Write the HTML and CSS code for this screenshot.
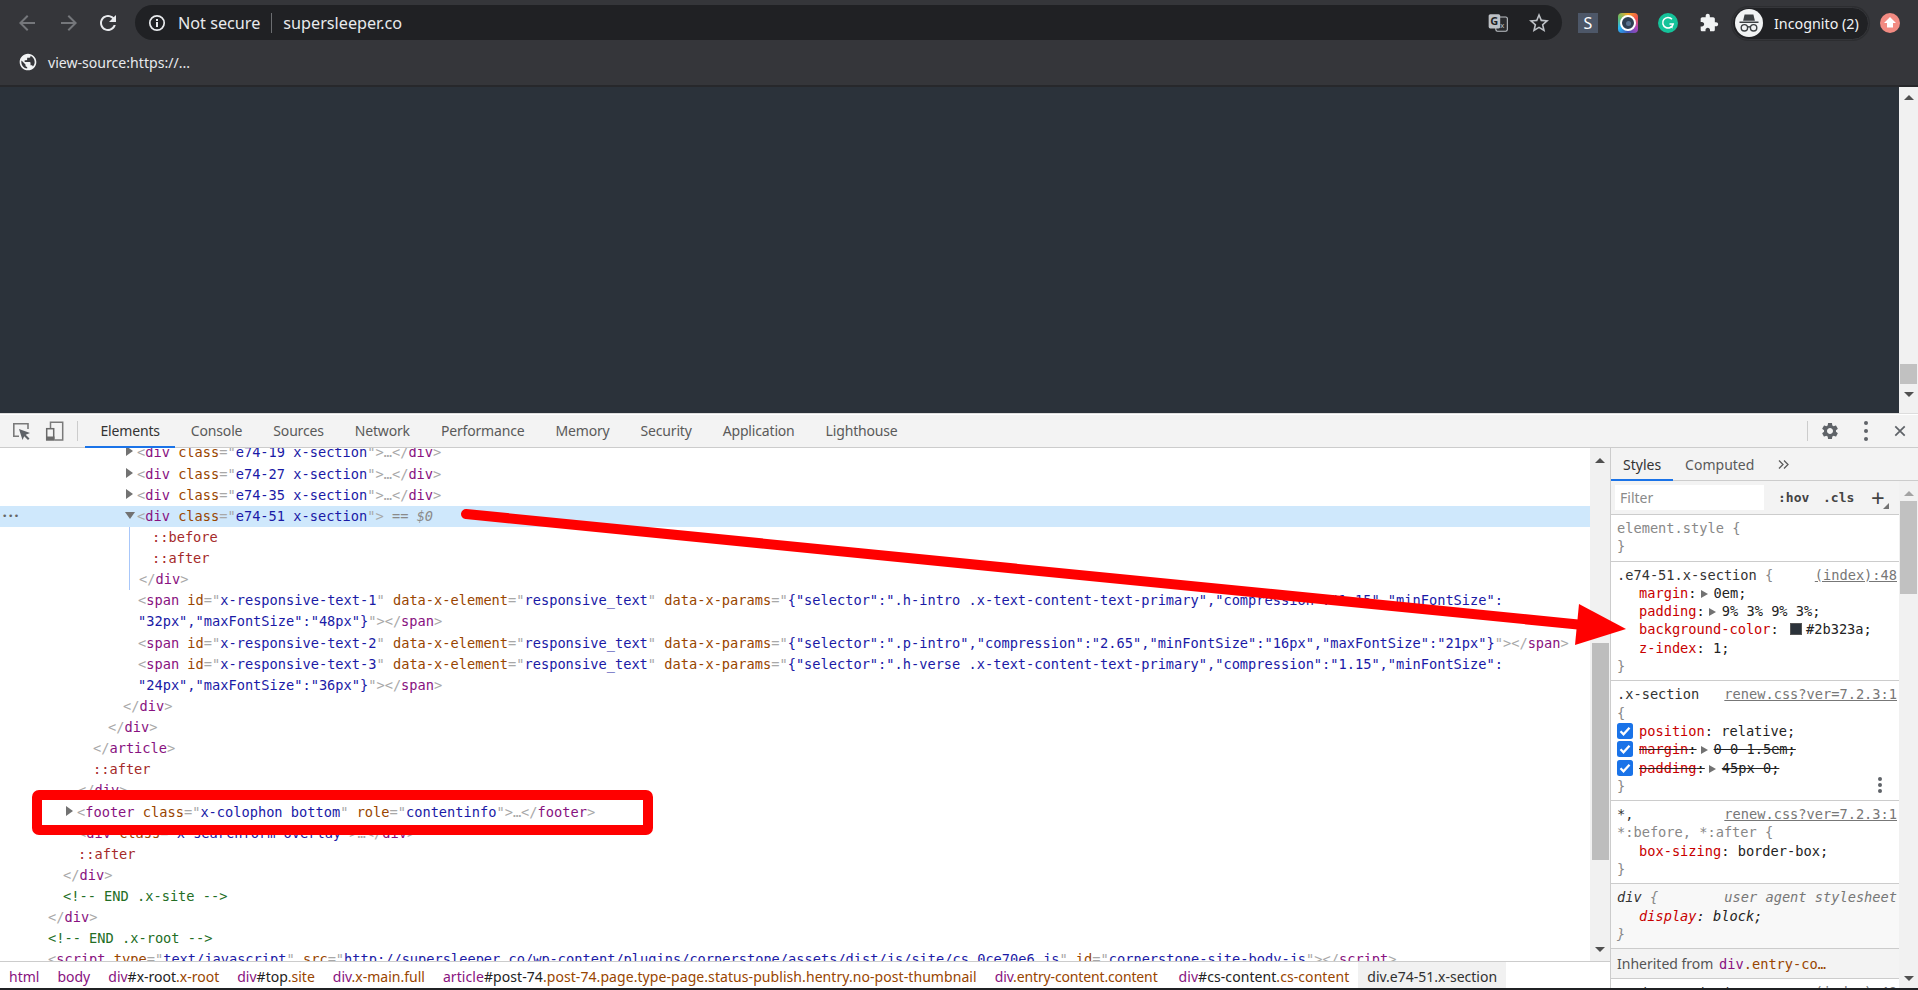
FILE: index.html
```html
<!DOCTYPE html>
<html lang="en">
<head>
<meta charset="utf-8">
<title>view-source:https://...</title>
<link rel="stylesheet" href="styles.css">
</head>
<body>
<div class="browser">
  <header class="chrome">
    <div class="navrow">
      <svg class="ic24 nav-btn dim" viewBox="0 0 24 24"><path d="M20 11H7.83l5.59-5.59L12 4l-8 8 8 8 1.41-1.41L7.83 13H20v-2z"/></svg>
      <svg class="ic24 nav-btn dim fwd" viewBox="0 0 24 24"><path d="M12 4l-1.41 1.41L16.17 11H4v2h12.17l-5.58 5.59L12 20l8-8z"/></svg>
      <svg class="ic24 nav-btn light" viewBox="0 0 24 24"><path d="M17.65 6.35C16.2 4.9 14.21 4 12 4c-4.42 0-7.99 3.58-7.99 8s3.57 8 7.99 8c3.73 0 6.84-2.55 7.73-6h-2.08c-.82 2.33-3.04 4-5.65 4-3.31 0-6-2.69-6-6s2.69-6 6-6c1.66 0 3.14.69 4.22 1.78L13 11h7V4l-2.35 2.35z"/></svg>
      <div class="omnibox">
        <svg class="info" viewBox="0 0 18 18"><circle cx="9" cy="9" r="7.2" fill="none" stroke="#e8eaed" stroke-width="1.7"/><rect x="8" y="8" width="2" height="5" fill="#e8eaed"/><rect x="8" y="5" width="2" height="2" fill="#e8eaed"/></svg>
        <span class="secure">Not secure</span>
        <span class="omni-sep"></span>
        <span class="url">supersleeper.co</span>
        <span class="spacer"></span>
        <svg class="translate" viewBox="0 0 20 20"><rect x="8" y="4.5" width="10.5" height="13" rx="1.5" fill="#2a2b2e" stroke="#bdc1c6" stroke-width="1"/><rect x="1.5" y="2" width="10.5" height="13" rx="1.5" fill="#bdc1c6"/><text x="3" y="12" class="tr-g">G</text><text x="12" y="14.5" class="tr-x">x</text></svg>
        <svg class="ic24 star" viewBox="0 0 24 24"><path d="M22 9.24l-7.19-.62L12 2 9.19 8.63 2 9.24l5.46 4.73L5.82 21 12 17.27 18.18 21l-1.63-7.03L22 9.24zM12 15.4l-3.76 2.27 1-4.28-3.32-2.88 4.38-.38L12 6.1l1.71 4.04 4.38.38-3.32 2.88 1 4.28L12 15.4z"/></svg>
      </div>
      <div class="extensions">
        <span class="ext-s">S</span>
        <span class="ext-lens"><span class="lens-ring"><span class="lens-core"></span></span></span>
        <svg class="ext-g" viewBox="0 0 20 20"><circle cx="10" cy="10" r="10" fill="#15c39a"/><path d="M14 6.2A5.3 5.3 0 1 0 15.2 11H11.5" fill="none" stroke="#fff" stroke-width="1.5"/><path d="M12 13.2l2.6.2-.2 2.3z" fill="#fff"/></svg>
        <svg class="ext-p" viewBox="0 0 24 24"><path d="M20.5 11H19V7c0-1.1-.9-2-2-2h-4V3.5C13 2.12 11.88 1 10.5 1S8 2.12 8 3.5V5H4c-1.1 0-1.99.9-1.99 2v3.8H3.5c1.49 0 2.7 1.21 2.7 2.7s-1.21 2.7-2.7 2.7H2V20c0 1.1.9 2 2 2h3.8v-1.5c0-1.49 1.21-2.7 2.7-2.7 1.49 0 2.7 1.21 2.7 2.7V22H17c1.1 0 2-.9 2-2v-4h1.5c1.38 0 2.5-1.12 2.5-2.5S21.88 11 20.5 11z"/></svg>
      </div>
      <div class="incognito">
        <svg class="inc-face" viewBox="0 0 28 28"><circle cx="14" cy="14" r="14" fill="#f1f3f4"/><path d="M9.6 5.5h8.8l1.5 6.2H8.1zM4.5 12.6h19v1.5h-19z" fill="#3c4043"/><g fill="none" stroke="#3c4043" stroke-width="1.4"><circle cx="9.4" cy="18.8" r="3.2"/><circle cx="18.6" cy="18.8" r="3.2"/><path d="M12.5 18.2q1.5-1 3 0"/></g></svg>
        <span class="inc-label">Incognito (2)</span>
      </div>
      <svg class="update" viewBox="0 0 20 20"><circle cx="10" cy="10" r="10" fill="#f28b82"/><path d="M10 4l6 6h-3v4.5H7V10H4z" fill="#fff"/></svg>
    </div>
    <div class="bookmarks">
      <svg class="globe" viewBox="0 0 24 24"><path d="M12 2C6.48 2 2 6.48 2 12s4.48 10 10 10 10-4.48 10-10S17.52 2 12 2zm-1 17.93c-3.95-.49-7-3.85-7-7.93 0-.62.08-1.21.21-1.79L9 15v1c0 1.1.9 2 2 2v1.93zm6.9-2.54c-.26-.81-1-1.39-1.9-1.39h-1v-3c0-.55-.45-1-1-1H8v-2h2c.55 0 1-.45 1-1V7h2c1.1 0 2-.9 2-2v-.41c2.93 1.19 5 4.06 5 7.41 0 2.08-.8 3.97-2.1 5.39z"/></svg>
      <span class="bm-label">view-source:https://...</span>
    </div>
  </header>

  <section class="page">
    <div class="page-canvas"></div>
    <div class="page-scroll">
      <span class="tri-up"></span>
      <span class="page-thumb"></span>
      <span class="tri-down"></span>
    </div>
  </section>

  <section class="devtools">
    <div class="dt-toolbar">
      <svg class="dt-ic" viewBox="0 0 20 20"><path d="M8 15.3H2.8V2.8H17V8" fill="none" stroke="#7a7a7a" stroke-width="1.6"/><path d="M8 8l11 4-4.3 1.8 3.8 3.8-1.5 1.5-3.8-3.8L11.5 19z" fill="#5f6368"/></svg>
      <svg class="dt-ic device" viewBox="0 0 20 20"><path d="M6.5 7V1.2H18.7V19H10.5" fill="none" stroke="#7a7a7a" stroke-width="1.5"/><rect x="2.7" y="7.7" width="7" height="11" fill="none" stroke="#6a6a6a" stroke-width="1.5"/><rect x="2" y="15.5" width="8.5" height="4" fill="#6a6a6a"/></svg>
      <span class="dt-sep"></span>
      <nav class="tabs">
        <span class="tab active">Elements</span>
        <span class="tab">Console</span>
        <span class="tab">Sources</span>
        <span class="tab">Network</span>
        <span class="tab">Performance</span>
        <span class="tab">Memory</span>
        <span class="tab">Security</span>
        <span class="tab">Application</span>
        <span class="tab">Lighthouse</span>
      </nav>
      <span class="spacer"></span>
      <span class="dt-sep right"></span>
      <svg class="ic24 gear" viewBox="0 0 24 24"><path d="M19.14 12.94c.04-.3.06-.61.06-.94 0-.32-.02-.64-.07-.94l2.03-1.58c.18-.14.23-.41.12-.61l-1.92-3.32c-.12-.22-.37-.29-.59-.22l-2.39.96c-.5-.38-1.03-.7-1.62-.94l-.36-2.54c-.04-.24-.24-.41-.48-.41h-3.84c-.24 0-.43.17-.47.41l-.36 2.54c-.59.24-1.13.57-1.62.94l-2.39-.96c-.22-.08-.47 0-.59.22L2.74 8.87c-.12.21-.08.47.12.61l2.03 1.58c-.05.3-.09.63-.09.94s.02.64.07.94l-2.03 1.58c-.18.14-.23.41-.12.61l1.92 3.32c.12.22.37.29.59.22l2.39-.96c.5.38 1.03.7 1.62.94l.36 2.54c.05.24.24.41.48.41h3.84c.24 0 .44-.17.47-.41l.36-2.54c.59-.24 1.13-.56 1.62-.94l2.39.96c.22.08.47 0 .59-.22l1.92-3.32c.12-.22.07-.47-.12-.61l-2.01-1.58zM12 15.6c-1.98 0-3.6-1.62-3.6-3.6s1.62-3.6 3.6-3.6 3.6 1.62 3.6 3.6-1.62 3.6-3.6 3.6z"/></svg>
      <span class="kebab dt-kebab"><i></i><i></i><i></i></span>
      <svg class="dt-close" viewBox="0 0 14 14"><path d="M1.5 1.5l11 11M12.5 1.5l-11 11" stroke="#5f6368" stroke-width="2" fill="none"/></svg>
    </div>

    <div class="dt-body">
      <div class="dt-main">
        <div class="dt-upper">
          <div class="tree">
            <div class="row l6"><span class="tri"></span><span class="p">&lt;</span><span class="t">div</span> <span class="a">class</span><span class="p">="</span><span class="v">e74-19 x-section</span><span class="p">"&gt;</span><span class="p">…&lt;/</span><span class="t">div</span><span class="p">&gt;</span></div>
            <div class="row l6"><span class="tri"></span><span class="p">&lt;</span><span class="t">div</span> <span class="a">class</span><span class="p">="</span><span class="v">e74-27 x-section</span><span class="p">"&gt;</span><span class="p">…&lt;/</span><span class="t">div</span><span class="p">&gt;</span></div>
            <div class="row l6"><span class="tri"></span><span class="p">&lt;</span><span class="t">div</span> <span class="a">class</span><span class="p">="</span><span class="v">e74-35 x-section</span><span class="p">"&gt;</span><span class="p">…&lt;/</span><span class="t">div</span><span class="p">&gt;</span></div>
            <div class="row l6 selected"><span class="more">•••</span><span class="tri open"></span><span class="p">&lt;</span><span class="t">div</span> <span class="a">class</span><span class="p">="</span><span class="v">e74-51 x-section</span><span class="p">"&gt;</span> <span class="dollar">== <em>$0</em></span></div>
            <div class="guide">
              <div class="row in"><span class="ps">::before</span></div>
              <div class="row in"><span class="ps">::after</span></div>
              <div class="row"><span class="p">&lt;/</span><span class="t">div</span><span class="p">&gt;</span></div>
            </div>
            <div class="row l6"><span class="p">&lt;</span><span class="t">span</span> <span class="a">id</span><span class="p">="</span><span class="v">x-responsive-text-1</span><span class="p">"</span> <span class="a">data-x-element</span><span class="p">="</span><span class="v">responsive_text</span><span class="p">"</span> <span class="a">data-x-params</span><span class="p">="</span><span class="v">{"selector":".h-intro .x-text-content-text-primary","compression":"1.15","minFontSize":</span></div>
            <div class="row l6"><span class="v">"32px","maxFontSize":"48px"}</span><span class="p">"&gt;&lt;/</span><span class="t">span</span><span class="p">&gt;</span></div>
            <div class="row l6"><span class="p">&lt;</span><span class="t">span</span> <span class="a">id</span><span class="p">="</span><span class="v">x-responsive-text-2</span><span class="p">"</span> <span class="a">data-x-element</span><span class="p">="</span><span class="v">responsive_text</span><span class="p">"</span> <span class="a">data-x-params</span><span class="p">="</span><span class="v">{"selector":".p-intro","compression":"2.65","minFontSize":"16px","maxFontSize":"21px"}</span><span class="p">"&gt;&lt;/</span><span class="t">span</span><span class="p">&gt;</span></div>
            <div class="row l6"><span class="p">&lt;</span><span class="t">span</span> <span class="a">id</span><span class="p">="</span><span class="v">x-responsive-text-3</span><span class="p">"</span> <span class="a">data-x-element</span><span class="p">="</span><span class="v">responsive_text</span><span class="p">"</span> <span class="a">data-x-params</span><span class="p">="</span><span class="v">{"selector":".h-verse .x-text-content-text-primary","compression":"1.15","minFontSize":</span></div>
            <div class="row l6"><span class="v">"24px","maxFontSize":"36px"}</span><span class="p">"&gt;&lt;/</span><span class="t">span</span><span class="p">&gt;</span></div>
            <div class="row l5"><span class="p">&lt;/</span><span class="t">div</span><span class="p">&gt;</span></div>
            <div class="row l4"><span class="p">&lt;/</span><span class="t">div</span><span class="p">&gt;</span></div>
            <div class="row l3"><span class="p">&lt;/</span><span class="t">article</span><span class="p">&gt;</span></div>
            <div class="row l3"><span class="ps">::after</span></div>
            <div class="row l2"><span class="p">&lt;/</span><span class="t">div</span><span class="p">&gt;</span></div>
            <div class="row l2"><span class="tri"></span><span class="p">&lt;</span><span class="t">footer</span> <span class="a">class</span><span class="p">="</span><span class="v">x-colophon bottom</span><span class="p">"</span> <span class="a">role</span><span class="p">="</span><span class="v">contentinfo</span><span class="p">"&gt;</span><span class="p">…&lt;/</span><span class="t">footer</span><span class="p">&gt;</span></div>
            <div class="row l2"><span class="p">&lt;</span><span class="t">div</span> <span class="a">class</span><span class="p">="</span><span class="v">x-searchform-overlay</span><span class="p">"&gt;</span><span class="p">…&lt;/</span><span class="t">div</span><span class="p">&gt;</span></div>
            <div class="row l2"><span class="ps">::after</span></div>
            <div class="row l1"><span class="p">&lt;/</span><span class="t">div</span><span class="p">&gt;</span></div>
            <div class="row l1"><span class="c">&lt;!-- END .x-site --&gt;</span></div>
            <div class="row l0"><span class="p">&lt;/</span><span class="t">div</span><span class="p">&gt;</span></div>
            <div class="row l0"><span class="c">&lt;!-- END .x-root --&gt;</span></div>
            <div class="row l0"><span class="p">&lt;</span><span class="t">script</span> <span class="a">type</span><span class="p">="</span><span class="v">text/javascript</span><span class="p">"</span> <span class="a">src</span><span class="p">="</span><span class="v">http://supersleeper.co/wp-content/plugins/cornerstone/assets/dist/js/site/cs.0ce70e6.js</span><span class="p">"</span> <span class="a">id</span><span class="p">="</span><span class="v">cornerstone-site-body-js</span><span class="p">"&gt;&lt;/</span><span class="t">script</span><span class="p">&gt;</span></div>
          </div>
          <div class="tree-scroll">
            <span class="tri-up"></span>
            <span class="tree-track"><span class="tree-thumb"></span></span>
            <span class="tri-down"></span>
          </div>
        </div>
        <div class="crumbs">
          <span class="crumb"><span class="t2">html</span></span>
          <span class="crumb"><span class="t2">body</span></span>
          <span class="crumb"><span class="t2">div</span>#x-root<span class="k">.x-root</span></span>
          <span class="crumb"><span class="t2">div</span>#top<span class="k">.site</span></span>
          <span class="crumb"><span class="t2">div</span><span class="k">.x-main.full</span></span>
          <span class="crumb wide"><span class="t2">article</span>#post-74<span class="k">.post-74.page.type-page.status-publish.hentry.no-post-thumbnail</span></span>
          <span class="crumb tight"><span class="t2">div</span><span class="k">.entry-content.content</span></span>
          <span class="crumb wide"><span class="t2">div</span>#cs-content<span class="k">.cs-content</span></span>
          <span class="crumb current">div.e74-51.x-section</span>
        </div>
      </div>

      <aside class="sidebar">
        <div class="side-tabs">
          <span class="stab active">Styles</span>
          <span class="stab">Computed</span>
          <svg class="chev" viewBox="0 0 11 9"><path d="M1 .5l4 4-4 4M6 .5l4 4-4 4" fill="none" stroke="#5a5a5a" stroke-width="1.3"/></svg>
        </div>
        <div class="side-content">
          <div class="side-scroller">
            <div class="filterbar">
              <span class="filter">Filter</span>
              <span class="fbtn hov">:hov</span>
              <span class="fbtn">.cls</span>
              <span class="plus">+</span>
            </div>
            <div class="rule">
              <div class="ln"><span class="sel dim-sel">element.style</span> <span class="br">{</span></div>
              <div class="ln"><span class="br">}</span></div>
            </div>
            <div class="rule">
              <div class="ln split"><span><span class="sel">.e74-51.x-section</span> <span class="br">{</span></span><span class="src">(index):48</span></div>
              <div class="ln decl"><span class="pn">margin</span>:<span class="mini"></span>0em;</div>
              <div class="ln decl"><span class="pn">padding</span>:<span class="mini"></span>9% 3% 9% 3%;</div>
              <div class="ln decl"><span class="pn">background-color</span>: <span class="swatch"></span>#2b323a;</div>
              <div class="ln decl"><span class="pn">z-index</span>: 1;</div>
              <div class="ln"><span class="br">}</span></div>
            </div>
            <div class="rule has-menu">
              <div class="ln split"><span class="sel">.x-section</span><span class="src">renew.css?ver=7.2.3:1</span></div>
              <div class="ln"><span class="br">{</span></div>
              <div class="ln chk"><span class="check"><svg viewBox="0 0 16 16"><path d="M3.5 8.3l3 3 6-6.5" fill="none" stroke="#fff" stroke-width="2.3"/></svg></span><span><span class="pn">position</span>: relative;</span></div>
              <div class="ln chk"><span class="check"><svg viewBox="0 0 16 16"><path d="M3.5 8.3l3 3 6-6.5" fill="none" stroke="#fff" stroke-width="2.3"/></svg></span><s class="strike"><span class="pn">margin</span>:<span class="mini"></span>0 0 1.5em;</s></div>
              <div class="ln chk"><span class="check"><svg viewBox="0 0 16 16"><path d="M3.5 8.3l3 3 6-6.5" fill="none" stroke="#fff" stroke-width="2.3"/></svg></span><s class="strike"><span class="pn">padding</span>:<span class="mini"></span>45px 0;</s></div>
              <div class="ln"><span class="br">}</span></div>
              <span class="kebab rule-kebab"><i></i><i></i><i></i></span>
            </div>
            <div class="rule">
              <div class="ln split"><span class="sel">*,</span><span class="src">renew.css?ver=7.2.3:1</span></div>
              <div class="ln"><span class="dim-sel">*:before, *:after</span> <span class="br">{</span></div>
              <div class="ln decl"><span class="pn">box-sizing</span>: border-box;</div>
              <div class="ln"><span class="br">}</span></div>
            </div>
            <div class="rule ua">
              <div class="ln split"><span><span class="sel">div</span> <span class="br">{</span></span><span class="src plain">user agent stylesheet</span></div>
              <div class="ln decl"><span class="pn">display</span>: block;</div>
              <div class="ln"><span class="br">}</span></div>
            </div>
            <div class="inherited">Inherited from <span class="inh-link"><span class="t">div</span><span class="a">.entry-co…</span></span></div>
            <div class="ln clipped split"><span class="sel">.entry-content</span><span class="src">(index):48</span></div>
          </div>
          <div class="side-scroll">
            <span class="tri-up pale"></span>
            <span class="side-thumb"></span>
            <span class="spacer"></span>
            <span class="tri-down"></span>
          </div>
        </div>
      </aside>
    </div>
  </section>
  <div class="bottom-edge"></div>
</div>

<svg class="annot" viewBox="0 0 1918 990">
  <path d="M466 514L1578 624.5" stroke="#ff0000" stroke-width="10" stroke-linecap="round" fill="none"/>
  <polygon points="1579,604 1626,629 1575,645" fill="#ff0000"/>
  <rect x="37" y="795" width="611" height="35" rx="2" fill="none" stroke="#ff0000" stroke-width="10"/>
</svg>
</body>
</html>
```

FILE: styles.css
```css
* { box-sizing: border-box; }
html, body { margin: 0; padding: 0; }
body {
  width: 1918px;
  height: 990px;
  overflow: hidden;
  background: #202124;
  font-family: "Noto Sans", "Open Sans", sans-serif;
}
.browser { display: flex; flex-direction: column; width: 1918px; height: 990px; }
.spacer { flex: 1; }

/* browser chrome */
.chrome { height: 87px; background: #35363a; border-bottom: 2px solid #27282b; flex: none; }
.navrow { height: 45px; display: flex; align-items: center; padding-top: 1px; }
.ic24 { width: 24px; height: 24px; flex: none; }
.nav-btn { margin-right: 18px; }
.nav-btn:first-child { margin-left: 15px; }
.nav-btn.fwd { margin-right: 15px; }
.nav-btn.dim { fill: #75777b; }
.nav-btn.light { fill: #e8eaed; margin-right: 15px; }
.omnibox {
  width: 1427px;
  height: 35px;
  margin-top: -1px;
  background: #202124;
  border-radius: 18px;
  display: flex;
  align-items: center;
  padding-left: 13px;
  padding-right: 11px;
  color: #e8eaed;
  font-size: 16.2px;
}
.info { width: 18px; height: 18px; flex: none; }
.secure { margin-left: 12px; }
.omni-sep { width: 1px; height: 20px; background: #6b6d70; margin: 0 11px 0 11px; }
.translate { width: 22px; height: 22px; margin-right: 18px; }
.tr-g { font: bold 10px "Noto Sans", sans-serif; fill: #202124; }
.tr-x { font: 7px "Noto Sans", sans-serif; fill: #bdc1c6; }
.star { fill: #bdc1c6; }
.extensions { display: flex; align-items: center; width: 170px; padding-left: 16px; flex: none; }
.ext-s {
  width: 20px; height: 20px; background: #4d5768; color: #fff;
  font-size: 16px; line-height: 20px; text-align: center; flex: none;
}
.ext-lens {
  width: 20px; height: 20px; margin-left: 20px; border-radius: 4px; flex: none;
  background: conic-gradient(#f9a825, #ef5350, #ab47bc, #3f51b5, #29b6f6, #66bb6a, #f9a825);
  display: flex; align-items: center; justify-content: center;
}
.lens-ring {
  width: 16px; height: 16px; border-radius: 50%; border: 2px solid #fff; background: #2f3f52;
  display: flex; align-items: center; justify-content: center;
}
.lens-core { width: 5px; height: 5px; border-radius: 50%; background: #5a7390; }
.ext-g { width: 20px; height: 20px; margin-left: 20px; flex: none; }
.ext-p { width: 20px; height: 20px; margin-left: 21px; fill: #f1f3f4; flex: none; }
.incognito {
  width: 137px; height: 33px;
  background: #202124; border: 1px solid #35363a; border-radius: 17px;
  box-shadow: 0 0 0 1px #2c2d30;
  display: flex; align-items: center; padding-left: 2px; flex: none;
  color: #f1f3f4; font-size: 14.3px;
}
.inc-face { width: 28px; height: 28px; flex: none; }
.inc-label { margin-left: 11px; }
.update { width: 20px; height: 20px; margin-left: 11px; flex: none; }
.bookmarks { height: 40px; display: flex; align-items: center; color: #e8eaed; font-size: 14.1px; padding-left: 18px; padding-bottom: 6px; }
.globe { width: 20px; height: 20px; fill: #f1f3f4; flex: none; }
.bm-label { margin-left: 10px; }

/* page */
.page { height: 326px; display: flex; flex: none; background: #2b323a; }
.page-canvas { flex: 1; }
.page-scroll { width: 19px; background: #f1f1f1; display: flex; flex-direction: column; align-items: center; position: relative; padding: 8px 0; }
.page-thumb { width: 17px; height: 20px; background: #c1c1c1; margin-top: 264px; }
.tri-up, .tri-down { width: 0; height: 0; border-left: 5px solid transparent; border-right: 5px solid transparent; flex: none; }
.tri-up { border-bottom: 5px solid #505050; }
.tri-up.pale { border-bottom-color: #a3a3a3; }
.tri-down { border-top: 5px solid #505050; }
.page .tri-down { margin-top: 8px; }

/* devtools */
.devtools { height: 575px; background: #fff; border-top: 1px solid #ddd; flex: none; display: flex; flex-direction: column; }
.dt-toolbar {
  height: 34px; flex: none; background: #f3f3f3; border-bottom: 1px solid #ccc;
  display: flex; align-items: stretch; position: relative;
  border-top: 1px solid #fff;
}
.dt-ic { width: 20px; height: 20px; align-self: center; margin-left: 11px; flex: none; }
.dt-ic.device { margin-left: 13px; }
.dt-sep { width: 1px; height: 20px; background: #ccc; align-self: center; margin-left: 13px; flex: none; }
.dt-sep.right { margin-left: 0; }
.tabs { display: flex; margin-left: 7px; }
.tab { padding: 0 15.5px; font-size: 14px; letter-spacing: -.17px; line-height: 31px; color: #5a5a5a; border-bottom: 2px solid transparent; height: 33px; white-space: nowrap; }
.tab.active { color: #333; border-bottom-color: #1a73e8; }
.gear { width: 20px; height: 20px; fill: #5f6368; align-self: center; margin-left: 12px; }
.kebab { display: flex; flex-direction: column; gap: 4px; width: 4px; }
.kebab i { display: block; width: 4px; height: 4px; border-radius: 50%; background: #5f6368; }
.dt-kebab { align-self: center; margin-left: 24px; }
.dt-close { width: 12px; height: 12px; align-self: center; margin-left: 26px; margin-right: 12px; }

.dt-body { flex: 1; display: flex; min-height: 0; }
.dt-main { width: 1611px; flex: none; border-right: 1px solid #ccc; display: flex; flex-direction: column; }
.dt-upper { height: 513px; display: flex; flex: none; overflow: hidden; }
.tree {
  width: 1590px; flex: none; overflow: hidden;
  font-family: "DejaVu Sans Mono", "Liberation Mono", monospace;
  font-size: 13.66px;
  margin-top: -5.6px;
}
.row { height: 21.13px; line-height: 21.13px; white-space: pre; position: relative; color: #222; }
.row.selected { background: #cfe8fc; }
.l0 { padding-left: 48px; }
.l1 { padding-left: 63px; }
.l2 { padding-left: 78px; }
.l3 { padding-left: 93px; }
.l4 { padding-left: 108px; }
.l5 { padding-left: 123px; }
.l6 { padding-left: 138px; }
.guide { margin-left: 129px; border-left: 1px solid #a8c7fa; padding-left: 9px; }
.row.in { padding-left: 13px; }
.t { color: #881280; }
.a { color: #994500; }
.v { color: #1a1aa6; }
.p { color: #a8a8a8; }
.ps { color: #a52a2a; }
.c { color: #236e25; }
.dollar { color: #8a8a8a; }
.dollar em { font-style: italic; }
.more { position: absolute; left: 2px; top: 0; color: #666; font-size: 9px; letter-spacing: .5px; }
.tri {
  display: inline-block; width: 0; height: 0; margin-left: -12px; margin-right: 4px;
  border-left: 7px solid #727272; border-top: 5px solid transparent; border-bottom: 5px solid transparent;
  vertical-align: 1px;
}
.tri.open { border-top: 7px solid #727272; border-left: 5px solid transparent; border-right: 5px solid transparent; border-bottom: 0; margin-left: -13px; margin-right: 2px; vertical-align: 2px; }
.tree-scroll { width: 20px; flex: none; background: #f1f1f1; display: flex; flex-direction: column; align-items: center; padding: 10px 0 9px; }
.tree-track { flex: 1; width: 17px; padding-top: 177px; padding-bottom: 84px; margin: 3px 0; display: flex; }
.tree-thumb { display: block; width: 17px; background: #bdbdbd; flex: 1; }

.crumbs {
  height: 27px; flex: none; border-top: 1px solid #ccc; background: #fff; display: flex; align-items: stretch;
  font-size: 14px; color: #222; white-space: nowrap; overflow: hidden;
}
.crumb { padding: 4px 9px 0; line-height: 22px; }
.crumb.wide { letter-spacing: .07px; }
.crumb.tight { letter-spacing: -.14px; padding-right: 12px; }
.crumb .t2 { color: #881280; }
.crumb .k { color: #994500; }
.crumb.current { background: #f1f1f1; color: #303030; }

/* sidebar */
.sidebar { width: 307px; flex: none; display: flex; flex-direction: column; min-height: 0; }
.side-tabs { height: 33px; flex: none; display: flex; background: #f3f3f3; border-bottom: 1px solid #ccc; font-size: 14px; }
.stab { padding: 0 12px; line-height: 33px; color: #5a5a5a; height: 33px; white-space: nowrap; }
.stab.active { color: #333; border-bottom: 2px solid #1a73e8; }
.chev { width: 11px; height: 9px; margin: 12px 0 0 12px; }
.side-content { flex: 1; display: flex; min-height: 0; }
.side-scroller { width: 288px; flex: none; overflow: hidden; font-family: "DejaVu Sans Mono", "Liberation Mono", monospace; font-size: 13.66px; color: #222; }
.filterbar { height: 34px; background: #f3f3f3; border-bottom: 1px solid #ccc; display: flex; align-items: center; padding-left: 4px; position: relative; }
.filter { width: 149px; height: 25px; background: #fff; font-family: "Noto Sans", sans-serif; font-size: 14px; line-height: 25px; color: #8a8a8a; padding-left: 5px; }
.fbtn { font-weight: bold; font-size: 13px; color: #444; margin-left: 13px; width: 32px; }
.hov { margin-left: 14px; }
.plus { font-family: "Noto Sans", sans-serif; font-size: 24px; line-height: 24px; color: #444; margin-left: 16px; }
.filterbar::after { content: ""; position: absolute; right: 10px; bottom: 5px; width: 0; height: 0; border-left: 6px solid transparent; border-bottom: 6px solid #727272; }
.rule { padding: 4px 2px 5px 6px; border-bottom: 1px solid #ccc; position: relative; }
.ln { height: 18.3px; line-height: 18.3px; white-space: pre; }
.split { display: flex; justify-content: space-between; }
.decl { padding-left: 22px; }
.sel { color: #333; }
.dim-sel { color: #888; }
.br { color: #888; }
.src { color: #777; text-decoration: underline; }
.src.plain { text-decoration: none; font-style: italic; }
.pn { color: #c80000; }
.swatch { display: inline-block; width: 12px; height: 12px; background: #2b323a; border: 1px solid #555; vertical-align: -1px; margin: 0 4px 0 3px; }
.mini { display: inline-block; width: 0; height: 0; border-left: 7px solid #727272; border-top: 4.5px solid transparent; border-bottom: 4.5px solid transparent; margin: 0 6px 0 4px; vertical-align: 0; }
.chk { display: flex; align-items: center; gap: 6px; }
.check { width: 16px; height: 16px; background: #1a73e8; border-radius: 2.5px; flex: none; display: block; }
.check svg { display: block; width: 16px; height: 16px; }
.strike { text-decoration: line-through; text-decoration-color: #222; }
.rule-kebab { position: absolute; right: 17px; bottom: 7px; gap: 2px; }
.ua { background: #f8f8f8; font-style: italic; }
.inherited { height: 30px; background: #f3f3f3; border-bottom: 1px solid #ccc; padding-left: 6px; font-family: "Noto Sans", sans-serif; font-size: 14px; line-height: 29px; color: #555; }
.inh-link { font-family: "DejaVu Sans Mono", monospace; font-size: 13.66px; margin-left: 2px; }
.clipped { padding: 4px 2px 0 6px; height: 10px; overflow: hidden; }
.side-scroll { width: 19px; flex: none; background: #f1f1f1; display: flex; flex-direction: column; align-items: center; padding: 10px 0 7px; }
.side-thumb { width: 17px; height: 93px; background: #c1c1c1; margin-top: 5px; }
.bottom-edge { flex: 1; background: #202124; }

/* annotations drawn over the screenshot */
.annot { position: absolute; left: 0; top: 0; width: 1918px; height: 990px; pointer-events: none; }
```
